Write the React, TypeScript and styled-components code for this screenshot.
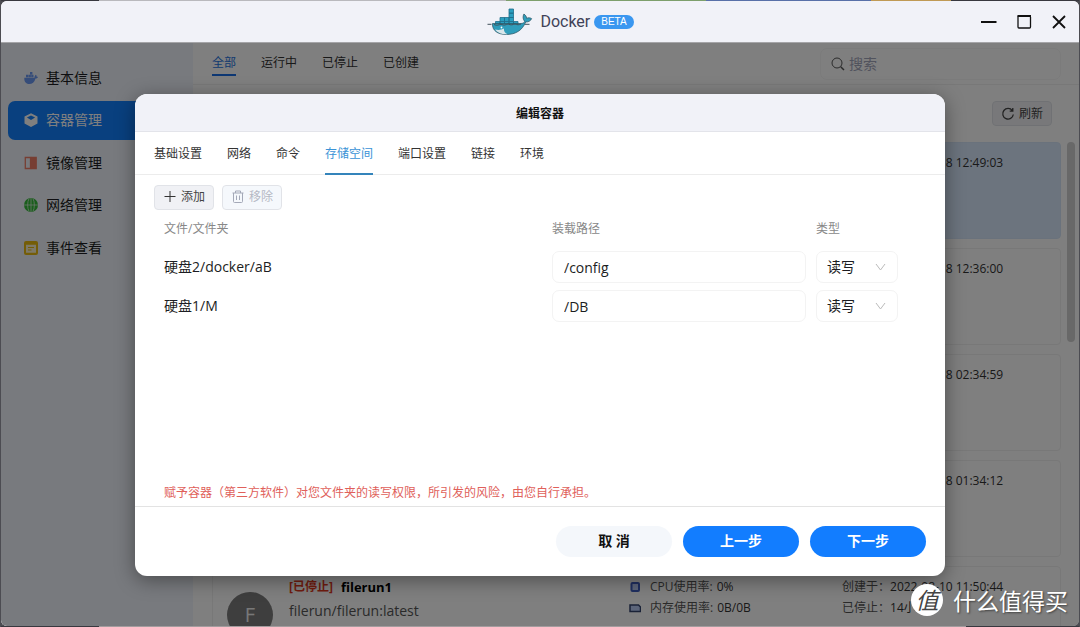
import React from "react";
import styled, { createGlobalStyle, css } from "styled-components";

const Global = createGlobalStyle`
  *, *::before, *::after { box-sizing: border-box; }
  body { margin: 0; background: #77777b; color: #1c1d22; font: 14px/20px "Open Sans", "Noto Sans CJK SC", sans-serif; }
  button, input, select { font: inherit; color: inherit; margin: 0; }
  button { cursor: pointer; }
  h1, h2, p { margin: 0; font: inherit; }
  svg { display: block; flex: none; }
`;

const Desktop = styled.div`
  display: flex;
  flex-direction: column;
  height: 100vh;
  padding: 0 1px;
  background: #4c4c52;
  overflow: hidden;
`;
const Backdrop = styled.svg`
  width: 100%;
  height: 1px;
`;
const Frame = styled.div`
  flex: 1;
  min-height: 0;
  display: flex;
  flex-direction: column;
  border-radius: 6px;
  background: #fff;
  overflow: hidden;
`;
const TitleBar = styled.header`
  flex: none;
  display: grid;
  grid-template-columns: 1fr auto 1fr;
  align-items: center;
  height: 42px;
  padding: 0 12px;
  background: #f1f2f8;
  border-bottom: 1px solid #a5a5a8;
`;
const Brand = styled.div`
  grid-column: 2;
  display: flex;
  align-items: center;
  padding-left: 41px;
  color: #3f4257;
  font-family: Roboto, sans-serif;
  font-size: 16px;
`;
const BrandName = styled.h1`
  padding: 0 4px 0 7px;
`;
const Beta = styled.span`
  padding: 0 7px;
  border-radius: 7px;
  background: #3a97f0;
  color: #fff;
  font: 10px/14px "Liberation Sans", sans-serif;
`;
const WindowButtons = styled.div`
  justify-self: end;
  display: flex;
  gap: 19px;
`;
const BareButton = styled.button`
  padding: 0;
  border: 0;
  background: none;
`;

const Body = styled.div`
  position: relative;
  flex: 1;
  min-height: 0;
  display: flex;
`;
const Sidebar = styled.aside`
  flex: none;
  width: 192px;
  padding: 15px 7px;
  background: #f1f5fc;
`;
const Nav = styled.nav`
  display: flex;
  flex-direction: column;
  justify-content: space-between;
  height: 209px;
`;
const NavItem = styled.a<{ $active?: boolean }>`
  display: flex;
  align-items: center;
  gap: 8px;
  height: 39px;
  padding: 0 16px;
  border-radius: 7px;
  color: ${(p) => (p.$active ? "#fff" : "#1c1d22")};
  background: ${(p) => (p.$active ? "#1280ff" : "transparent")};
  text-decoration: none;
`;
const Main = styled.main`
  flex: 1;
  min-width: 0;
  display: flex;
  flex-direction: column;
`;
const FilterBar = styled.div`
  flex: none;
  display: flex;
  align-items: center;
  height: 42px;
  padding: 0 18px 0 19px;
  border-bottom: 1px solid #f0f0f0;
`;
const Filters = styled.div`
  flex: 1;
  display: flex;
  gap: 25px;
`;
const Filter = styled.button<{ $active?: boolean }>`
  height: 24px;
  padding: 0;
  border: 0;
  border-bottom: 2px solid ${(p) => (p.$active ? "#1a6fe6" : "transparent")};
  background: none;
  color: ${(p) => (p.$active ? "#2a76e0" : "#333")};
  font-size: 12px;
`;
const Search = styled.label`
  display: flex;
  align-items: center;
  gap: 4px;
  width: 241px;
  height: 32px;
  padding: 0 10px;
  border: 1px solid #f6f6f6;
  border-radius: 7px;
`;
const SearchInput = styled.input`
  flex: 1;
  min-width: 0;
  padding: 0;
  border: 0;
  outline: 0;
  background: none;
  &::placeholder { color: #a3a6bb; opacity: 1; }
`;
const Actions = styled.div`
  flex: none;
  display: flex;
  justify-content: flex-end;
  padding: 16px 27px;
`;
const SmallButton = styled.button`
  display: flex;
  align-items: center;
  justify-content: center;
  gap: 4px;
  width: 60px;
  height: 25px;
  padding: 0;
  border: 1px solid #e1e3e8;
  border-radius: 4px;
  background: #f0f1f5;
  color: #444;
  font-size: 12px;
  &:disabled { color: #b5b9c4; background: #f5f8fc; cursor: default; }
`;
const Scroller = styled.div`
  flex: 1;
  min-height: 0;
  display: flex;
  gap: 6px;
  padding: 0 4px 0 19px;
  overflow: hidden;
`;
const Cards = styled.div`
  flex: 1;
  display: flex;
  flex-direction: column;
  gap: 9px;
`;
const Card = styled.article<{ $selected?: boolean }>`
  flex: none;
  display: flex;
  height: 97px;
  padding: 10px 14px;
  border: 1px solid ${(p) => (p.$selected ? "#d5e5f8" : "#f0f0f0")};
  border-radius: 4px;
  background: ${(p) => (p.$selected ? "#d9e9fd" : "#fff")};
`;
const Avatar = styled.div`
  flex: none;
  width: 46px;
  height: 46px;
  margin: 15px 16px 0 0;
  border-radius: 50%;
  background: #7c7c7c;
  color: #f0f0f0;
  font-size: 20px;
  line-height: 46px;
  text-align: center;
`;
const CardText = styled.div`
  flex: 1;
  display: flex;
  flex-direction: column;
  gap: 4px;
  color: #555;
`;
const CardName = styled.div`
  display: flex;
  gap: 8px;
  color: #000;
  font-size: 13px;
  font-weight: 700;
`;
const Stopped = styled.span`
  color: #e0391c;
  font-size: 12px;
`;
const Facts = styled.dl<{ $width: number }>`
  display: flex;
  flex-direction: column;
  gap: 1px;
  width: ${(p) => p.$width}px;
  margin: 0 0 0 auto;
  font-size: 12px;
`;
const Fact = styled.div`
  display: flex;
  align-items: center;
`;
const FactLabel = styled.dt<{ $wide?: boolean }>`
  flex: none;
  padding: ${(p) => (p.$wide ? "0 4px 0 9px" : "0")};
  color: #555;
`;
const FactValue = styled.dd`
  margin: 0;
  color: #333;
  white-space: nowrap;
`;
const Thumb = styled.div`
  flex: none;
  width: 8px;
  height: 200px;
  border-radius: 4px;
  background: #d0d0d0;
`;

const Overlay = styled.div`
  position: absolute;
  inset: 0;
  display: flex;
  align-items: center;
  justify-content: center;
  background: rgba(0, 0, 0, 0.5);
`;
const Dialog = styled.section`
  display: flex;
  flex-direction: column;
  width: 75vw;
  min-height: 482px;
  border-radius: 12px;
  background: #fff;
  box-shadow: 0 4px 20px rgba(0, 0, 0, 0.4);
  overflow: hidden;
`;
const DialogTitle = styled.h2`
  height: 38px;
  padding-top: 1px;
  border-bottom: 1px solid #e3e4ea;
  background: #f1f2f8;
  color: #111;
  font-size: 12px;
  font-weight: 700;
  line-height: 38px;
  text-align: center;
`;
const Tabs = styled.div`
  display: flex;
  gap: 25px;
  height: 43px;
  padding: 0 19px;
  border-bottom: 1px solid #ececec;
`;
const Tab = styled.button<{ $active?: boolean }>`
  height: 43px;
  padding: 2px 0 0;
  border: 0;
  background: none;
  color: #333;
  font-size: 12px;
  ${(p) =>
    p.$active &&
    css`
      color: #3a92d6;
      box-shadow: inset 0 -2px #3484bb;
    `}
`;
const Toolbar = styled.div`
  display: flex;
  gap: 8px;
  padding: 10px 19px 0;
`;
const Mounts = styled.table`
  width: 100%;
  table-layout: fixed;
  border-collapse: collapse;
  td, th { padding: 0 10px 0 0; text-align: left; }
  td:first-child, th:first-child { padding-left: 29px; }
  th { height: 38px; color: #888; font-size: 12px; font-weight: 400; }
  td { height: 39px; }
`;
const Column = styled.col<{ $width?: number }>`
  width: ${(p) => (p.$width ? `${p.$width}px` : "auto")};
`;
const fieldBox = css`
  height: 32px;
  border: 1px solid #f3f3f3;
  border-radius: 7px;
  background: #fff;
  outline: 0;
`;
const PathInput = styled.input`
  ${fieldBox}
  display: block;
  width: 100%;
  padding: 0 11px;
`;
const SelectWrap = styled.div`
  position: relative;
  width: 82px;
`;
const ModeSelect = styled.select`
  ${fieldBox}
  display: block;
  width: 100%;
  padding: 0 10px;
  appearance: none;
`;
const Chevron = styled.svg`
  position: absolute;
  right: 12px;
  top: 12px;
  pointer-events: none;
`;
const Warning = styled.p`
  margin-top: auto;
  padding: 0 29px 3px;
  color: #e0605a;
  font-size: 12px;
`;
const DialogFooter = styled.footer`
  display: flex;
  justify-content: flex-end;
  gap: 11px;
  padding: 19px;
  border-top: 1px solid #e3e3e3;
`;
const Pill = styled.button<{ $primary?: boolean }>`
  width: 116px;
  height: 31px;
  padding: 0;
  border: 0;
  border-radius: 16px;
  background: ${(p) => (p.$primary ? "#127dff" : "#f4f7fb")};
  color: ${(p) => (p.$primary ? "#fff" : "#111")};
  font-weight: 700;
`;

const Watermark = styled.div`
  position: absolute;
  right: 11px;
  bottom: 10px;
  display: flex;
  align-items: center;
  gap: 10px;
  color: #fff;
  font: 23px/32px "Noto Sans CJK SC", sans-serif;
  text-shadow: 1px 1px 2px rgba(0, 0, 0, 0.5);
`;
const Seal = styled.span`
  width: 32px;
  height: 32px;
  border-radius: 50%;
  background: #fff;
  color: #444;
  font-style: italic;
  line-height: 30px;
  text-align: center;
  text-shadow: none;
`;

const WhaleLogo = () => (
  <svg width="46" height="28" viewBox="0 0 46 28" aria-hidden="true">
    <g fill="#2b9fc0" stroke="#1f6f8c" strokeWidth="0.8">
      <path d="M8.500 13.500h4.500v4h-4.500zM13 13.500h4.500v4H13zM17.500 13.500H22v4h-4.500zM22 13.500h4.500v4H22zM26.500 13.500H31v4h-4.500z" />
      <path d="M13 9.500h4.500v4H13zM17.500 9.500H22v4h-4.500zM22 9.500h4.500v4H22zM22 5.200h4.500v4.300H22zM22 1h4.500v4.200H22z" />
    </g>
    <path d="M5.500 15.500h28.500c1.800 0 3.200-.8 3.700-2.200-1.900-1.900-2.100-4.800-.8-7.300 1.700 1.100 2.700 2.600 2.700 4.300 1.600-.8 3.500-.7 5 .3-.8 2.300-3 3.500-5.900 3.400C35.500 22 29 26.500 19.500 26.500 10.500 26.500 5 22.500 5.500 15.500z" fill="#2f9dbb" stroke="#28505f" strokeWidth="0.7" />
    <path d="M8 21.500c3.500.8 6.500.3 9-.9-.3 2.800 1 4.700 3.500 5.700-5.700.3-10.200-1.500-12.500-4.800z" fill="#d9e6ea" />
    <path d="M.5 16.300h4M7 16.500c3 1.500 5 .2 7-.3 3 1.600 5 .5 7-.2 3 1.500 5 .6 7 0 2.500 1 4 .9 6 0M38 16.300h4.500" fill="none" stroke="#43505a" strokeWidth="1" />
    <circle cx="14.500" cy="19.500" r="0.900" fill="#fff" />
  </svg>
);

const icons: Record<string, React.ReactNode> = {
  info: (
    <path d="M.3 6.800h10.200c0-1.400.5-2.500 1.400-3.100.7.700.9 1.300.8 2 .5-.1 1 0 1.300.3-.5 1.100-1.400 1.500-2.500 1.500-1 3.600-3.200 5.600-6.300 5.600C1.900 13.100.1 10.700.3 6.800zM2 3.800h2.300v2.500H2zM4.600 3.800h2.300v2.500H4.600zM7.200 3.800h2.300v2.500H7.200zM6 1h2.400v2.500H6z" fill="#6b98f2" />
  ),
  container: (
    <path fillRule="evenodd" d="M7 .2l6.500 3.400v7L7 13.900.5 10.600v-7zM7 2.500L2.900 4.600 7 6.900l4.100-2.300z" fill="#fff" />
  ),
  image: (
    <g fill="none" stroke="#ef7d66" strokeWidth="1.300">
      <path d="M1.300 1.500h5.200v11H1.300z" />
      <path d="M7.500 1.500h4.700v11H7.500z" fill="#ef7d66" />
    </g>
  ),
  network: (
    <>
      <circle cx="7" cy="7" r="7" fill="#34bd38" />
      <path d="M0 7h14M7 0v14M5 .6C3.200 4 3.200 10 5 13.400M9 .6C10.800 4 10.800 10 9 13.400" fill="none" stroke="#d5ead9" strokeWidth="0.800" />
    </>
  ),
  events: (
    <>
      <rect width="14" height="14" rx="2" fill="#e9ba10" />
      <path d="M2 3.800h10v8H2z" fill="#fbf3d0" />
      <path d="M4 6.500h6M4 9h3.500" stroke="#e9ba10" strokeWidth="1.200" />
    </>
  ),
};

const navItems = [
  { id: "info", label: "基本信息" },
  { id: "container", label: "容器管理" },
  { id: "image", label: "镜像管理" },
  { id: "network", label: "网络管理" },
  { id: "events", label: "事件查看" },
];
const filters = ["全部", "运行中", "已停止", "已创建"];
const containers = ["2022-08-18 12:49:03", "2022-08-18 12:36:00", "2022-08-18 02:34:59", "2022-08-18 01:34:12"];
const tabs = ["基础设置", "网络", "命令", "存储空间", "端口设置", "链接", "环境"];
const mounts = [
  { source: "硬盘2/docker/aB", target: "/config" },
  { source: "硬盘1/M", target: "/DB" },
];

export default function App() {
  return (
    <>
      <Global />
      <Desktop>
        <Backdrop viewBox="0 0 1078 1" preserveAspectRatio="none" aria-hidden="true">
          <path d="M0 0h98v1H0zM860 0h218v1H860z" fill="#38383f" />
          <path d="M98 0h407v1H98z" fill="#b9b9bd" />
          <path d="M505 0h200v1H505z" fill="#7d9f6c" />
          <path d="M705 0h165v1H705z" fill="#5870a8" />
          <path d="M870 0h80v1h-80z" fill="#c09a55" />
        </Backdrop>
        <Frame>
          <TitleBar>
            <Brand>
              <WhaleLogo />
              <BrandName>Docker</BrandName>
              <Beta>BETA</Beta>
            </Brand>
            <WindowButtons>
              <BareButton aria-label="最小化">
                <svg width="16" height="16" viewBox="0 0 16 16"><path d="M0 8h15.500" stroke="#111" strokeWidth="2" /></svg>
              </BareButton>
              <BareButton aria-label="最大化">
                <svg width="16" height="16" viewBox="0 0 16 16" fill="none" stroke="#111"><rect x="2" y="2" width="12.500" height="12" rx="1" strokeWidth="1.300" /><path d="M1.500 2h13.500" strokeWidth="2" /></svg>
              </BareButton>
              <BareButton aria-label="关闭">
                <svg width="16" height="16" viewBox="0 0 16 16"><path d="M2 2l12 12M14 2L2 14" stroke="#111" strokeWidth="1.800" /></svg>
              </BareButton>
            </WindowButtons>
          </TitleBar>
          <Body>
            <Sidebar>
              <Nav>
                {navItems.map((item) => (
                  <NavItem key={item.id} href={`#${item.id}`} $active={item.id === "container"}>
                    <svg width="14" height="14" viewBox="0 0 14 14" aria-hidden="true">{icons[item.id]}</svg>
                    {item.label}
                  </NavItem>
                ))}
              </Nav>
            </Sidebar>
            <Main>
              <FilterBar>
                <Filters>
                  {filters.map((label, i) => (
                    <Filter key={label} $active={i === 0}>{label}</Filter>
                  ))}
                </Filters>
                <Search>
                  <svg width="14" height="14" viewBox="0 0 14 14" fill="none" stroke="#555"><circle cx="6" cy="6" r="5" /><path d="M9.700 9.700l3.300 3.300" strokeWidth="1.500" /></svg>
                  <SearchInput type="search" placeholder="搜索" aria-label="搜索" />
                </Search>
              </FilterBar>
              <Actions>
                <SmallButton>
                  <svg width="14" height="14" viewBox="0 0 14 14" fill="none" stroke="#444" strokeWidth="1.300"><path d="M11.300 3.600A5.300 5.300 0 1 0 12.300 7.500M11.800 1v3.200H8.700" /></svg>
                  刷新
                </SmallButton>
              </Actions>
              <Scroller>
                <Cards>
                  {containers.map((created, i) => (
                    <Card key={created} $selected={i === 0}>
                      <Facts $width={204}>
                        <Fact><FactLabel>创建于：</FactLabel><FactValue>{created}</FactValue></Fact>
                      </Facts>
                    </Card>
                  ))}
                  <Card>
                    <Avatar>F</Avatar>
                    <CardText>
                      <CardName><Stopped>[已停止]</Stopped>filerun1</CardName>
                      <div>filerun/filerun:latest</div>
                    </CardText>
                    <Facts $width={213}>
                      <Fact>
                        <svg width="12" height="12" viewBox="0 0 12 12"><rect x="2.500" y="2" width="7.500" height="8" rx="1" fill="#b9cbf5" stroke="#3f5fc0" strokeWidth="2" /></svg>
                        <FactLabel $wide>CPU使用率:</FactLabel><FactValue>0%</FactValue>
                      </Fact>
                      <Fact>
                        <svg width="12" height="12" viewBox="0 0 12 12"><path d="M1 3h8.500l2 2v4.500H1z" fill="#b9cbf5" stroke="#34446f" strokeWidth="1.500" /></svg>
                        <FactLabel $wide>内存使用率:</FactLabel><FactValue>0B/0B</FactValue>
                      </Fact>
                    </Facts>
                    <Facts $width={204}>
                      <Fact><FactLabel>创建于：</FactLabel><FactValue>2022-08-10 11:50:44</FactValue></Fact>
                      <Fact><FactLabel>已停止：</FactLabel><FactValue>14小</FactValue></Fact>
                    </Facts>
                  </Card>
                </Cards>
                <Thumb />
              </Scroller>
            </Main>
            <Overlay>
              <Dialog role="dialog" aria-labelledby="dialog-title">
                <DialogTitle id="dialog-title">编辑容器</DialogTitle>
                <Tabs role="tablist">
                  {tabs.map((label) => (
                    <Tab key={label} role="tab" aria-selected={label === "存储空间"} $active={label === "存储空间"}>{label}</Tab>
                  ))}
                </Tabs>
                <Toolbar>
                  <SmallButton>
                    <svg width="14" height="14" viewBox="0 0 14 14" stroke="#333"><path d="M1.500 6.500h11M7 1v11" /></svg>
                    添加
                  </SmallButton>
                  <SmallButton disabled>
                    <svg width="14" height="14" viewBox="0 0 14 14" fill="none" stroke="#a4a9b8"><path d="M1.500 3h11M4.500 3V1h5v2M2.500 3v8.500q0 1 1 1h7q1 0 1-1V3M5.500 5.500v4.500M8.500 5.500v4.500" /></svg>
                    移除
                  </SmallButton>
                </Toolbar>
                <Mounts>
                  <colgroup>
                    <Column />
                    <Column $width={264} />
                    <Column $width={129} />
                  </colgroup>
                  <thead>
                    <tr><th>文件/文件夹</th><th>装载路径</th><th>类型</th></tr>
                  </thead>
                  <tbody>
                    {mounts.map((m) => (
                      <tr key={m.source}>
                        <td>{m.source}</td>
                        <td><PathInput defaultValue={m.target} aria-label="装载路径" /></td>
                        <td>
                          <SelectWrap>
                            <ModeSelect aria-label="类型" defaultValue="rw">
                              <option value="rw">读写</option>
                            </ModeSelect>
                            <Chevron width="11" height="8" viewBox="0 0 11 8" fill="none" stroke="#bbb"><path d="M1 1l4.500 6L10 1" /></Chevron>
                          </SelectWrap>
                        </td>
                      </tr>
                    ))}
                  </tbody>
                </Mounts>
                <Warning>赋予容器（第三方软件）对您文件夹的读写权限，所引发的风险，由您自行承担。</Warning>
                <DialogFooter>
                  <Pill>取 消</Pill>
                  <Pill $primary>上一步</Pill>
                  <Pill $primary>下一步</Pill>
                </DialogFooter>
              </Dialog>
            </Overlay>
            <Watermark><Seal>值</Seal>什么值得买</Watermark>
          </Body>
        </Frame>
        <Backdrop viewBox="0 0 1078 1" preserveAspectRatio="none" aria-hidden="true">
          <path d="M0 0h98v1H0zM965 0h113v1H965z" fill="#38383f" />
          <path d="M98 0h867v1H98z" fill="#a39c9e" />
        </Backdrop>
      </Desktop>
    </>
  );
}
